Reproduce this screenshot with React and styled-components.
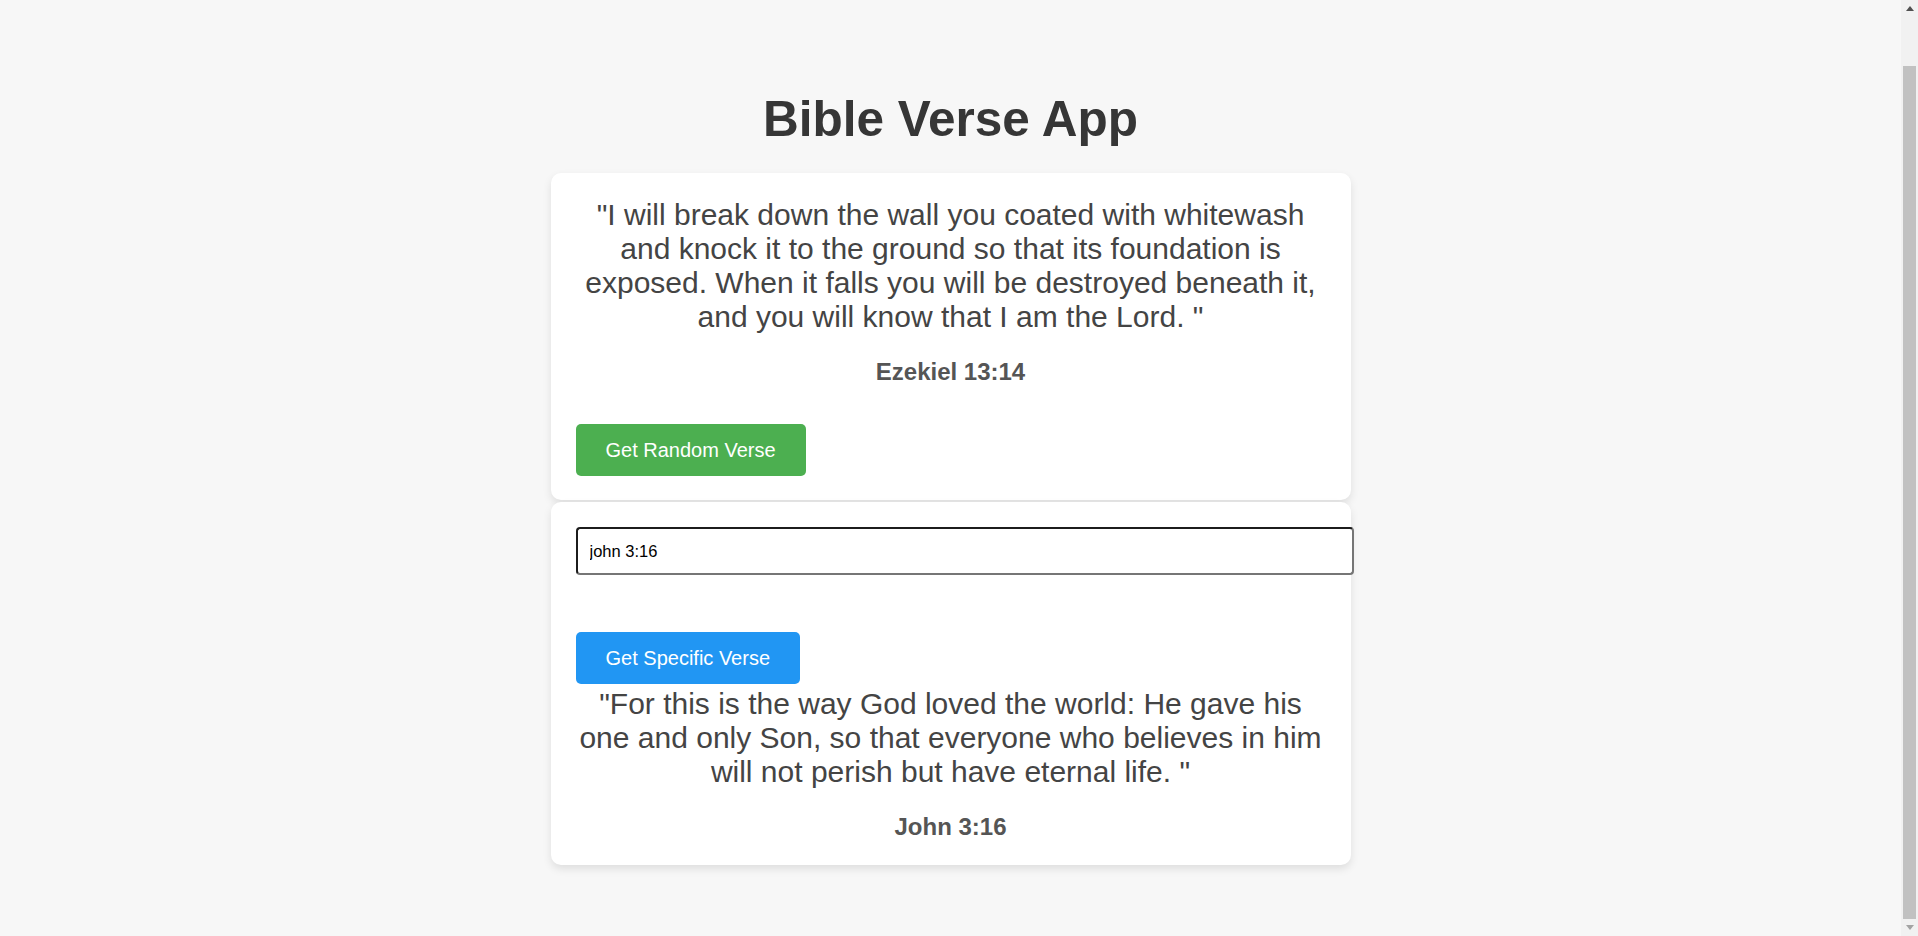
import React, { useState } from "react";
import styled, { createGlobalStyle } from "styled-components";

const GlobalStyle = createGlobalStyle`
  html, body {
    margin: 0;
    padding: 0;
  }
  body {
    background: #f7f7f7;
    font-family: "Liberation Sans", Arial, Helvetica, sans-serif;
    color: #333;
  }
`;

const Page = styled.main`
  display: flex;
  flex-direction: column;
  align-items: center;
  padding: 90px 17px 56px 0;
`;

const Title = styled.h1`
  margin: 0 0 26px;
  font-size: 49.5px;
  font-weight: 700;
  color: #363636;
  text-align: center;
`;

const Stack = styled.div`
  width: 800px;
  display: flex;
  flex-direction: column;
  gap: 2px;
`;

const Card = styled.section`
  background: #fff;
  border-radius: 10px;
  box-shadow: 0 4px 8px rgba(0, 0, 0, 0.1);
  padding: 25px 25px 24px;
  display: flex;
  flex-direction: column;
  align-items: flex-start;
`;

const Quote = styled.p`
  margin: 0;
  width: 100%;
  font-size: 30px;
  color: #444;
  text-align: center;
`;

const Reference = styled.h3`
  margin: 24px 0 0;
  width: 100%;
  font-size: 24px;
  font-weight: 700;
  color: #555;
  text-align: center;
`;

const Button = styled.button`
  display: block;
  margin: ${(p) => p.$gap || 0}px 0 ${(p) => p.$after || 0}px;
  padding: 15px 30px;
  border: none;
  border-radius: 5px;
  background: ${(p) => p.$color};
  color: #fff;
  font-family: "Liberation Sans", Arial, sans-serif;
  font-size: 20px;
  line-height: 22px;
  cursor: pointer;
`;

const Input = styled.input`
  width: 100%;
  box-sizing: content-box;
  margin: 0;
  padding: 12px;
  border: 2px solid;
  border-color: #1c1c1c #767676 #767676 #1c1c1c;
  border-radius: 4px;
  font-family: "Liberation Sans", Arial, sans-serif;
  font-size: 16.5px;
  line-height: 20px;
  color: #000;
  background: #fff;
  outline: none;
`;

/* Browser's classic scrollbar, as seen in the screenshot */
const Scrollbar = styled.div`
  position: fixed;
  top: 0;
  right: 0;
  width: 17px;
  height: 100vh;
  background: #f1f1f1;
  display: flex;
  flex-direction: column;
`;

const Arrow = styled.div`
  height: 17px;
  flex: none;
  display: flex;
  align-items: center;
  justify-content: center;
  &::before {
    content: "";
    width: 0;
    height: 0;
    border-left: 4.5px solid transparent;
    border-right: 4.5px solid transparent;
    ${(p) =>
      p.$down
        ? "border-top: 5px solid #a3a3a3;"
        : "border-bottom: 5px solid #505050;"}
  }
`;

const Track = styled.div`
  flex: 1;
  display: flex;
  flex-direction: column;
  padding: 49px 2px 0;
`;

const Thumb = styled.div`
  flex: 1;
  background: #c1c1c1;
`;

export default function App() {
  const [query, setQuery] = useState("john 3:16");

  return (
    <>
      <GlobalStyle />
      <Page>
        <Title>Bible Verse App</Title>
        <Stack>
          <Card>
            <Quote>
              "I will break down the wall you coated with whitewash and knock it
              to the ground so that its foundation is exposed. When it falls you
              will be destroyed beneath it, and you will know that I am the Lord. "
            </Quote>
            <Reference>Ezekiel 13:14</Reference>
            <Button $color="#4caf50" $gap={37.7}>Get Random Verse</Button>
          </Card>
          <Card>
            <Input
              type="text"
              value={query}
              onChange={(e) => setQuery(e.target.value)}
            />
            <Button $color="#2196f3" $gap={57} $after={3.5}>
              Get Specific Verse
            </Button>
            <Quote>
              "For this is the way God loved the world: He gave his one and only
              Son, so that everyone who believes in him will not perish but have
              eternal life. "
            </Quote>
            <Reference>John 3:16</Reference>
          </Card>
        </Stack>
      </Page>
      <Scrollbar aria-hidden="true">
        <Arrow />
        <Track>
          <Thumb />
        </Track>
        <Arrow $down />
      </Scrollbar>
    </>
  );
}
